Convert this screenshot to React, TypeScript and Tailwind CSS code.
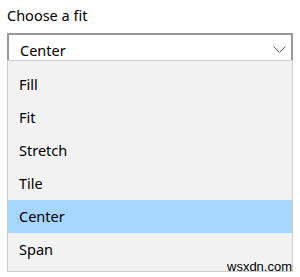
import React from "react";

const items = ["Fill", "Fit", "Stretch", "Tile", "Center", "Span"];

export default function App() {
  return (
    <div
      className="relative w-[300px] h-[277px] bg-white text-[14.5px] text-black overflow-hidden"
      style={{ fontFamily: '"Noto Sans", "Open Sans", sans-serif' }}
    >
      <div className="pl-[7px] pt-[5px] h-[25px] leading-[20px]">Choose a fit</div>
      <div className="mt-[8px] ml-[7px] w-[286px]">
        <div className="h-[27px] border-t-2 border-l-2 border-r-2 border-[#999999] bg-white flex items-start pl-[11px] pr-[5px]">
          <span className="leading-[20px] mt-[5px] flex-1">Center</span>
          <svg width="13" height="8" viewBox="0 0 13 8" className="mt-[11px]">
            <polyline points="0.5,0.5 6.5,6.5 12.5,0.5" fill="none" stroke="#555555" strokeWidth="1" />
          </svg>
        </div>
        <div className="border border-[#cccccc] bg-[#f2f2f2] pt-[7px] pb-[5px]">
          {items.map((it) => (
            <div
              key={it}
              className={
                it === "Center"
                  ? "h-[33px] flex items-center pl-[11px] bg-[#a6d6fd]"
                  : "h-[33px] flex items-center pl-[11px]"
              }
            >
              <span className="leading-[20px] -mt-[1px]">{it}</span>
            </div>
          ))}
        </div>
      </div>
      <span
        className="absolute left-[227px] top-[260px] text-[13px] leading-[13px] text-black"
        style={{ fontFamily: '"Liberation Sans", Arial, sans-serif' }}
      >
        wsxdn.com
      </span>
    </div>
  );
}
